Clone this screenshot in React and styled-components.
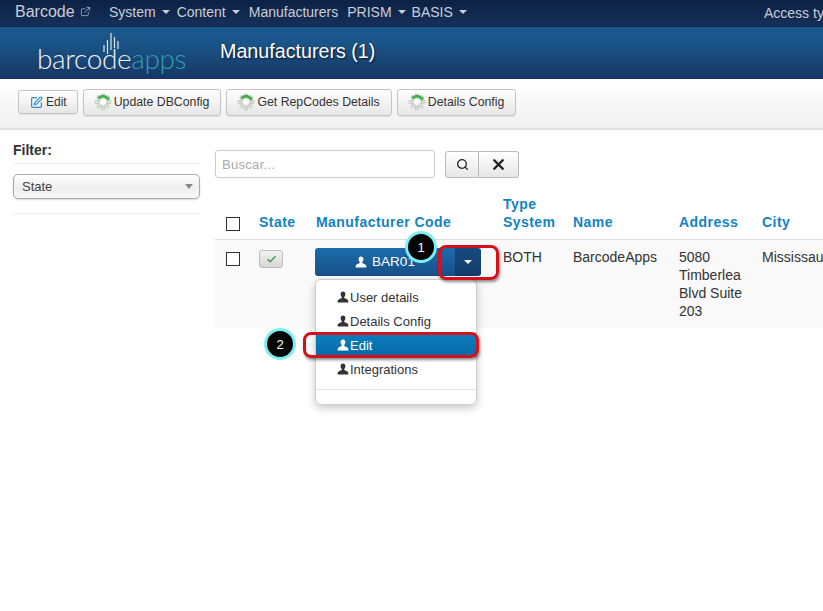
import React from "react";
import styled, { createGlobalStyle } from "styled-components";
import { ExternalLink, SquarePen, Search, X, Check } from "lucide-react";

const Global = createGlobalStyle`
  html, body { margin: 0; padding: 0; background: #fff; }
  body { font-family: "Liberation Sans", Arial, sans-serif; font-size: 14px; color: #333; }
  * { box-sizing: border-box; }
`;

const Page = styled.div`
  position: relative;
  width: 823px;
  height: 611px;
  overflow: hidden;
  background: #fff;
`;

const NavBar = styled.nav`
  display: flex;
  align-items: center;
  height: 27px;
  padding: 0 0 3px 15px;
  background: linear-gradient(#0d2244, #15305b);
  border-bottom: 1px solid #0f2342;
  color: #c9ced6;
  white-space: nowrap;
`;
const Brand = styled.span`
  display: flex;
  align-items: center;
  gap: 5px;
  width: 94px;
  font-size: 16px;
`;
const NavItem = styled.span`
  display: flex;
  align-items: center;
  gap: 6px;
  margin-right: ${(p) => p.$gap ?? 7}px;
  font-size: 14px;
`;
const NavCaret = styled.i`
  width: 0;
  height: 0;
  border-left: 4px solid transparent;
  border-right: 4px solid transparent;
  border-top: 4px solid #c9ced6;
`;
const NavRight = styled.span`
  margin-left: auto;
  margin-right: -12px;
  width: 71px;
  overflow: hidden;
  font-size: 14px;
  position: relative;
  top: 1px;
`;

const Header = styled.header`
  display: flex;
  align-items: center;
  height: 52px;
  background: linear-gradient(#1a5a90 0%, #1a5386 35%, #163563 100%);
`;
const Logo = styled.div`
  position: relative;
  flex: 0 0 220px;
  height: 52px;
  padding: 12px 0 0 37px;
  font-family: "Lato", sans-serif;
  font-weight: 300;
  font-size: 28px;
  line-height: 38px;
  letter-spacing: -0.35px;
  color: #eef3f7;
  white-space: nowrap;
`;
const LogoAccent = styled.span`
  color: #2f9fb0;
`;
const LogoBars = styled.svg`
  position: absolute;
  left: 103px;
  top: 5px;
`;
const Title = styled.h1`
  margin: 0 0 4px;
  font-size: 19.7px;
  font-weight: 400;
  color: #fff;
  text-shadow: 1px 1px 2px rgba(0, 0, 0, 0.7);
`;

const Toolbar = styled.div`
  display: flex;
  align-items: center;
  gap: 5px;
  height: 51px;
  padding: 0 18px 3px;
  background: linear-gradient(#fff, #f1f1f1);
  border-bottom: 2px solid #e0e0e0;
`;
const ToolButton = styled.button`
  display: flex;
  align-items: center;
  gap: ${(p) => (p.$small ? 3 : 2)}px;
  height: ${(p) => (p.$small ? 24 : 27)}px;
  padding: 0 ${(p) => (p.$small ? 10 : 11)}px 0 ${(p) => (p.$small ? 11 : 10)}px;
  font: ${(p) => (p.$small ? 12 : 12.3)}px "Liberation Sans", Arial, sans-serif;
  color: #333;
  background: linear-gradient(#fff, #e6e6e6);
  border: 1px solid #c4c4c4;
  border-radius: 3px;
  box-shadow: 0 1px 1px rgba(0, 0, 0, 0.08);
`;

const Body = styled.div`
  display: flex;
`;
const Sidebar = styled.aside`
  flex: 0 0 215px;
  padding: 11px 15px 0 13px;
`;
const FilterTitle = styled.div`
  height: 23px;
  font-size: 14px;
  font-weight: 700;
  line-height: 18px;
  border-bottom: 1px solid #eee;
`;
const Select = styled.div`
  display: flex;
  align-items: center;
  justify-content: space-between;
  height: 25px;
  margin-top: 10px;
  padding: 0 6px 0 8px;
  font-size: 13px;
  color: #444;
  background: linear-gradient(#fff, #eee 55%, #f8f8f8);
  border: 1px solid #aaa;
  border-radius: 5px;
  box-shadow: 0 1px 2px rgba(0, 0, 0, 0.15);
`;
const SelectCaret = styled.i`
  width: 0;
  height: 0;
  border-left: 4px solid transparent;
  border-right: 4px solid transparent;
  border-top: 5px solid #888;
`;
const SideRule = styled.div`
  margin-top: 14px;
  border-top: 1px solid #eee;
`;

const Main = styled.main`
  flex: 0 0 auto;
  padding-top: 20px;
`;
const SearchBar = styled.div`
  display: flex;
  height: 28px;
`;
const SearchInput = styled.div`
  display: flex;
  align-items: center;
  width: 220px;
  margin-right: 10px;
  padding-left: 6px;
  font-size: 13px;
  letter-spacing: 0.3px;
  color: #aaa;
  border: 1px solid #ccc;
  border-radius: 3px;
`;
const SearchButton = styled.button`
  display: flex;
  align-items: center;
  justify-content: center;
  width: ${(p) => p.$w}px;
  height: 27px;
  margin-top: 1px;
  padding: 0;
  color: #222;
  background: linear-gradient(#fff, #e6e6e6);
  border: 1px solid #bbb;
  border-left-width: ${(p) => (p.$join ? 0 : 1)}px;
  border-radius: ${(p) => (p.$join ? "0 3px 3px 0" : "3px 0 0 3px")};
`;

const Table = styled.table`
  width: 780px;
  margin-top: 17px;
  border-collapse: collapse;
  table-layout: fixed;
`;
const Th = styled.th`
  padding: 0 8px 8px;
  vertical-align: bottom;
  text-align: left;
  font-size: 14px;
  line-height: 18px;
  letter-spacing: 0.45px;
  color: #1283c2;
  border-bottom: 1px solid #ddd;
`;
const Td = styled.td`
  padding: 8px 8px 8px;
  vertical-align: top;
  font-size: 14px;
  line-height: 18px;
  color: #333;
  background: #f9f9f9;
`;
const Box = styled.span`
  display: block;
  width: 14px;
  height: 14px;
  margin: ${(p) => p.$m};
  background: #fff;
  border: 1px solid #333;
`;
const StateButton = styled.span`
  display: flex;
  align-items: center;
  justify-content: center;
  width: 24px;
  height: 18px;
  margin-top: 2px;
  background: linear-gradient(#f3f3f3, #d6d6d6);
  border: 1px solid #bbb;
  border-radius: 3px;
  color: #3c9a4a;
`;
const SplitGroup = styled.div`
  display: flex;
  width: 166px;
  height: 28px;
  margin-left: -1px;
`;
const MainPart = styled.div`
  display: flex;
  flex: 1;
  align-items: center;
  justify-content: center;
  gap: 5px;
  font-size: 13.5px;
  color: #fff;
  background: linear-gradient(#1c6dab, #174f87);
  border-radius: 3px 0 0 3px;
`;
const CaretPart = styled.div`
  display: flex;
  align-items: center;
  justify-content: center;
  width: 26px;
  background: linear-gradient(#17497e, #123c6c);
  border-radius: 0 3px 3px 0;
`;
const WhiteCaret = styled.i`
  width: 0;
  height: 0;
  border-left: 4px solid transparent;
  border-right: 4px solid transparent;
  border-top: 4px solid #fff;
`;

const Menu = styled.div`
  position: absolute;
  left: 315px;
  top: 279px;
  width: 162px;
  height: 126px;
  padding-top: 5px;
  background: #fff;
  border: 1px solid #ccc;
  border-radius: 6px;
  box-shadow: 0 3px 8px rgba(0, 0, 0, 0.22);
`;
const MenuItem = styled.div`
  display: flex;
  align-items: center;
  gap: 1px;
  height: 24px;
  padding-left: 21px;
  font-size: 13px;
  color: ${(p) => (p.$active ? "#fff" : "#333")};
  background: ${(p) => (p.$active ? "linear-gradient(#0a7fc0, #0868a4)" : "transparent")};
`;
const MenuRule = styled.div`
  margin-top: 8px;
  border-top: 1px solid #e5e5e5;
`;

const Highlight = styled.div`
  position: absolute;
  left: ${(p) => p.$x}px;
  top: ${(p) => p.$y}px;
  width: ${(p) => p.$w}px;
  height: ${(p) => p.$h}px;
  border: 3px solid #d4111b;
  border-radius: 8px;
  box-shadow: 1px 2px 3px rgba(0, 0, 0, 0.45);
`;
const Marker = styled.div`
  position: absolute;
  left: ${(p) => p.$x}px;
  top: ${(p) => p.$y}px;
  display: flex;
  align-items: center;
  justify-content: center;
  width: 32px;
  height: 32px;
  font-size: 13px;
  color: #fff;
  background: #050505;
  border: 3px solid #7cf0f0;
  border-radius: 50%;
`;

const Person = ({ color = "#333", size = 12 }) => (
  <svg width={size} height={size} viewBox="0 0 12 12" fill={color}>
    <path d="M6 0.5C4.5 0.5 3.6 1.6 3.6 3.2c0 1.2.5 2.2 1.2 2.8v1.1C3.4 7.8 1.2 8.5.8 9.6L.5 11.5h11l-.3-1.9C10.8 8.5 8.6 7.8 7.2 7.1V6c.7-.6 1.2-1.6 1.2-2.8C8.4 1.6 7.5.5 6 .5z" />
  </svg>
);

const Gear = () => (
  <svg width="18" height="18" viewBox="0 0 18 18">
    <g fill="#dcdfdc" stroke="#b4b8b4" strokeWidth="0.5">
      <circle cx="9" cy="9" r="5.6" />
      {[0, 45, 90, 135, 180, 225, 270, 315].map((a) => (
        <rect key={a} x="7.6" y="1" width="2.8" height="3.5" transform={`rotate(${a} 9 9)`} />
      ))}
    </g>
    <circle cx="9" cy="9" r="2.8" fill="#fff" />
    <path d="M4.5 5.5A5.5 5.5 0 0 1 13.5 5.5" fill="none" stroke="#3fb04a" strokeWidth="2.8" />
    <path d="M15.5 3.5l-.3 4-3.4-1.8z" fill="#3fb04a" />
  </svg>
);

const Bars = () => (
  <LogoBars width="18" height="24" viewBox="0 0 18 24" stroke="#dfe8ef" strokeWidth="1.2">
    <path d="M1 13v7M4.5 8v14M8 1v17M11.5 5v11M15 9v8" />
  </LogoBars>
);

const menuItems = ["User details", "Details Config", "Edit", "Integrations"];

export default function App() {
  return (
    <Page>
      <Global />
      <NavBar>
        <Brand>
          Barcode <ExternalLink size={11} strokeWidth={1.5} />
        </Brand>
        <NavItem>System <NavCaret /></NavItem>
        <NavItem $gap={9}>Content <NavCaret /></NavItem>
        <NavItem $gap={9}>Manufacturers</NavItem>
        <NavItem $gap={6}>PRISM <NavCaret /></NavItem>
        <NavItem>BASIS <NavCaret /></NavItem>
        <NavRight>Access type</NavRight>
      </NavBar>

      <Header>
        <Logo>
          <Bars />
          barcode<LogoAccent>apps</LogoAccent>
        </Logo>
        <Title>Manufacturers (1)</Title>
      </Header>

      <Toolbar>
        <ToolButton $small>
          <SquarePen size={13} color="#2f8fc4" strokeWidth={2.2} /> Edit
        </ToolButton>
        <ToolButton><Gear /> Update DBConfig</ToolButton>
        <ToolButton><Gear /> Get RepCodes Details</ToolButton>
        <ToolButton><Gear /> Details Config</ToolButton>
      </Toolbar>

      <Body>
        <Sidebar>
          <FilterTitle>Filter:</FilterTitle>
          <Select>State <SelectCaret /></Select>
          <SideRule />
        </Sidebar>
        <Main>
          <SearchBar>
            <SearchInput>Buscar...</SearchInput>
            <SearchButton $w={34}><Search size={13} strokeWidth={2.4} /></SearchButton>
            <SearchButton $w={40} $join><X size={17} strokeWidth={3.4} /></SearchButton>
          </SearchBar>
          <Table>
            <colgroup>
              <col style={{ width: 36 }} />
              <col style={{ width: 57 }} />
              <col style={{ width: 187 }} />
              <col style={{ width: 70 }} />
              <col style={{ width: 106 }} />
              <col style={{ width: 83 }} />
              <col style={{ width: 241 }} />
            </colgroup>
            <thead>
              <tr>
                <Th><Box $m="0 0 0 3px" /></Th>
                <Th>State</Th>
                <Th>Manufacturer Code</Th>
                <Th>Type System</Th>
                <Th>Name</Th>
                <Th>Address</Th>
                <Th>City</Th>
              </tr>
            </thead>
            <tbody>
              <tr>
                <Td><Box $m="4px 0 0 3px" /></Td>
                <Td><StateButton><Check size={11} strokeWidth={3} /></StateButton></Td>
                <Td>
                  <SplitGroup>
                    <MainPart><Person color="#fff" /> BAR01</MainPart>
                    <CaretPart><WhiteCaret /></CaretPart>
                  </SplitGroup>
                </Td>
                <Td>BOTH</Td>
                <Td>BarcodeApps</Td>
                <Td>5080 Timberlea Blvd Suite 203</Td>
                <Td>Mississauga</Td>
              </tr>
            </tbody>
          </Table>
        </Main>
      </Body>

      <Menu>
        {menuItems.map((label) => (
          <MenuItem key={label} $active={label === "Edit"}>
            <Person color={label === "Edit" ? "#fff" : "#333"} /> {label}
          </MenuItem>
        ))}
        <MenuRule />
      </Menu>

      <Highlight $x={438} $y={245} $w={61} $h={35} />
      <Highlight $x={303} $y={332} $w={176} $h={26} />
      <Marker $x={405} $y={231}>1</Marker>
      <Marker $x={264} $y={328}>2</Marker>
    </Page>
  );
}
